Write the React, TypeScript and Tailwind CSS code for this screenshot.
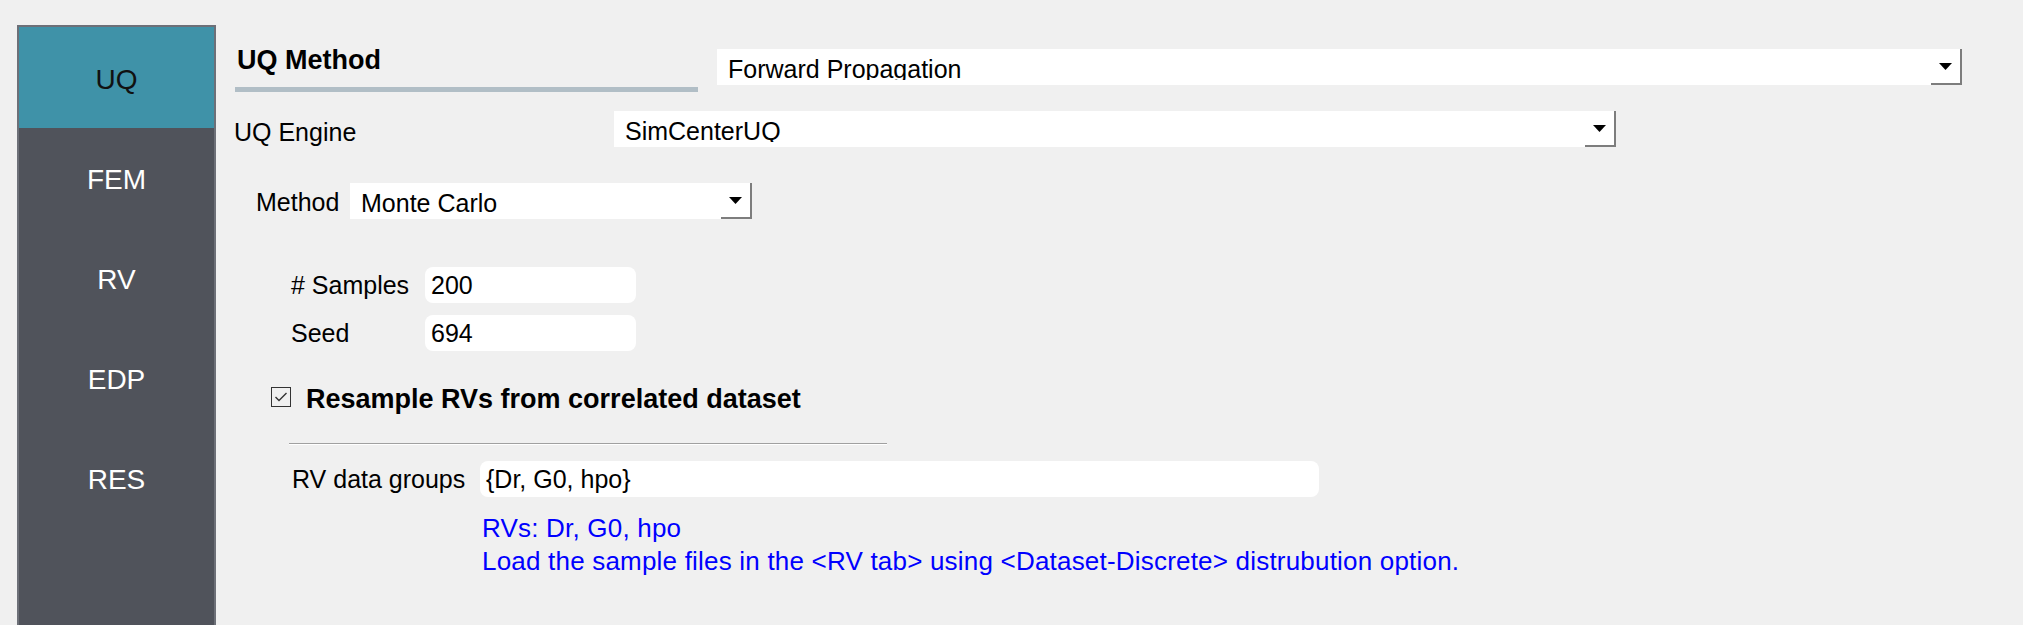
import React from "react";

const tabs = ["UQ", "FEM", "RV", "EDP", "RES"];

function Arrow() {
  return (
    <svg width="13" height="7" viewBox="0 0 13 7">
      <polygon points="0,0 13,0 6.5,7" fill="#000" />
    </svg>
  );
}

function Combo({ value, className }: { value: string; className: string }) {
  return (
    <div className={`flex h-[36px] bg-white ${className}`}>
      <div className="flex-1 h-[31px] overflow-hidden pl-[11px]">
        <div className="leading-[36px] pt-[2px] whitespace-nowrap">{value}</div>
      </div>
      <div className="w-[31px] h-[36px] flex items-center justify-center border-r-2 border-b-2 border-[#7d7d7d]">
        <Arrow />
      </div>
    </div>
  );
}

function Field({ value, className }: { value: string; className: string }) {
  return (
    <div className={`h-[36px] bg-white rounded-[8px] pl-[6px] leading-[36px] ${className}`}>
      {value}
    </div>
  );
}

export default function App() {
  return (
    <div className="flex w-[2023px] h-[625px] bg-[#f0f0f0] text-[25px] leading-[30px] text-black font-['Liberation_Sans',Arial,sans-serif] overflow-hidden">
      {/* side tabs */}
      <div className="ml-[17px] mt-[25px] w-[199px] h-[620px] border-2 border-[#6d7078] bg-[#50535b] flex flex-col">
        {tabs.map((t, i) => (
          <div
            key={t}
            className={
              i === 0
                ? "h-[101px] pt-[4px] flex items-center justify-center bg-[#3f92a8] text-[#111] text-[28px]"
                : "h-[100px] pt-[4px] flex items-center justify-center text-white text-[28px]"
            }
          >
            {t}
          </div>
        ))}
      </div>

      {/* main panel */}
      <div className="flex flex-col flex-1">
        <div className="flex items-start mt-[45px] ml-[19px]">
          <div className="w-[463px]">
            <div className="h-[31px] leading-[31px] pl-[2px] font-bold text-[27px]">UQ Method</div>
            <div className="mt-[11px] h-[5px] bg-[#b1bec6]" />
          </div>
          <Combo value="Forward Propagation" className="mt-[4px] ml-[19px] w-[1245px]" />
        </div>

        <div className="flex items-center mt-[19px] ml-[18px]">
          <div className="w-[380px] pt-[6px]">UQ Engine</div>
          <Combo value="SimCenterUQ" className="w-[1002px]" />
        </div>

        <div className="flex items-center mt-[36px] ml-[40px]">
          <div className="w-[94px] pt-[2px]">Method</div>
          <Combo value="Monte Carlo" className="w-[402px]" />
        </div>

        <div className="flex items-center mt-[48px] ml-[75px]">
          <div className="w-[134px]"># Samples</div>
          <Field value="200" className="w-[211px]" />
        </div>
        <div className="flex items-center mt-[12px] ml-[75px]">
          <div className="w-[134px]">Seed</div>
          <Field value="694" className="w-[211px]" />
        </div>

        <div className="flex items-center h-[20px] mt-[36px] ml-[55px]">
          <div className="w-[20px] h-[20px] border border-[#333] flex items-center justify-center">
            <svg width="14" height="12" viewBox="0 0 14 12">
              <polyline points="1.5,6 5,9.5 12.5,2" fill="none" stroke="#333" strokeWidth="1.4" />
            </svg>
          </div>
          <div className="ml-[15px] pt-[3px] font-bold text-[27px] whitespace-nowrap">
            Resample RVs from correlated dataset
          </div>
        </div>

        <div className="mt-[36px] ml-[73px] w-[598px] h-px bg-[#a0a0a0] border-b border-white box-content" />

        <div className="flex items-center mt-[16px] ml-[76px]">
          <div className="w-[188px]">RV data groups</div>
          <Field value="{Dr, G0, hpo}" className="w-[839px]" />
        </div>

        <div className="mt-[15px] ml-[266px] text-[#0000ff] text-[26px] tracking-[0.2px] leading-[33px] whitespace-nowrap">
          <div>RVs: Dr, G0, hpo</div>
          <div>Load the sample files in the &lt;RV tab&gt; using &lt;Dataset-Discrete&gt; distrubution option.</div>
        </div>
      </div>
    </div>
  );
}
